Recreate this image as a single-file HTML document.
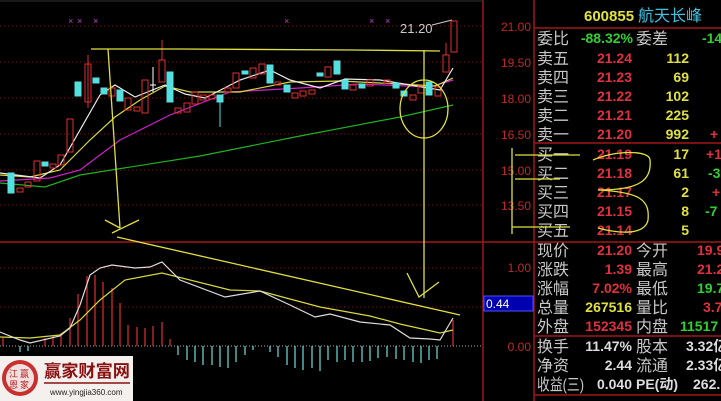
<!DOCTYPE html>
<html><head><meta charset="utf-8"><style>
html,body{margin:0;padding:0;background:#000;width:721px;height:401px;overflow:hidden}
svg{display:block}
text{font-family:"Liberation Sans","Noto Sans CJK SC",sans-serif}
.cj{font-family:"Noto Sans CJK SC","WenQuanYi Zen Hei",sans-serif}
</style></head><body>
<svg width="721" height="401" viewBox="0 0 721 401" xmlns="http://www.w3.org/2000/svg">
<rect width="721" height="401" fill="#000"/>
<g stroke="#7a1010" stroke-width="1" stroke-dasharray="1,3">
<line x1="0" y1="26" x2="483" y2="26"/><line x1="0" y1="62" x2="483" y2="62"/>
<line x1="0" y1="98" x2="483" y2="98"/><line x1="0" y1="134" x2="483" y2="134"/>
<line x1="0" y1="170" x2="483" y2="170"/><line x1="0" y1="205" x2="483" y2="205"/>
<line x1="0" y1="268" x2="483" y2="268"/><line x1="0" y1="307" x2="483" y2="307"/>
</g>
<line x1="0" y1="346" x2="483" y2="346" stroke="#aaa" stroke-dasharray="1,2"/>
<g stroke="#a01818" stroke-width="1.5">
<line x1="483" y1="0" x2="483" y2="401"/><line x1="534" y1="0" x2="534" y2="401"/>
<line x1="0" y1="242" x2="534" y2="242"/>
<line x1="534" y1="28" x2="721" y2="28"/><line x1="534" y1="143" x2="721" y2="143"/>
<line x1="534" y1="242" x2="721" y2="242"/><line x1="534" y1="336" x2="721" y2="336"/>
<line x1="534" y1="395" x2="721" y2="395"/>
</g>
<line x1="0" y1="1" x2="483" y2="1" stroke="#333"/>
<g fill="#c02828" font-size="12" text-anchor="end">
<text x="531" y="31">21.00</text><text x="531" y="67">19.50</text><text x="531" y="103">18.00</text>
<text x="531" y="139">16.50</text><text x="531" y="175">15.00</text><text x="531" y="210">13.50</text>
<text x="531" y="272">1.00</text><text x="531" y="351">0.00</text>
</g>
<rect x="484" y="296" width="49" height="15" fill="#0000b0" stroke="#5050ff"/>
<text x="486" y="308" fill="#fff" font-size="12">0.44</text>
<g fill="#c040c0" font-size="9"><text x="68" y="24">×</text><text x="77" y="24">×</text><text x="93" y="24">×</text><text x="284" y="24">×</text><text x="369" y="24">×</text><text x="385" y="24">×</text></g>
<text x="400" y="33" fill="#ccc" font-size="13">21.20</text>
<line x1="432" y1="25" x2="452" y2="20" stroke="#ccc"/>
<g fill="none" stroke-width="1.2">
<polyline stroke="#20b020" points="0,183 45,187 80,175 200,156 300,136 400,117 453,105"/>
<polyline stroke="#d020d0" points="0,181 50,178 80,170 120,140 170,115 230,92 300,88 360,84 430,87 453,80"/>
<polyline stroke="#d8d840" points="0,175 30,177 60,170 90,140 115,117 140,100 165,86 190,92 240,92 290,82 340,81 400,84 435,86 453,78"/>
<polyline stroke="#eee" points="0,173 40,178 60,165 80,130 100,95 115,85 135,97 165,85 185,94 205,98 240,80 270,70 290,80 320,88 345,79 380,80 410,85 440,90 453,68"/>
</g>
<g stroke-width="1">
<g fill="#55e0e0" stroke="#55e0e0">
<rect x="8" y="173" width="6" height="20"/><rect x="42" y="162" width="6" height="4"/><rect x="75" y="82" width="6" height="14"/><rect x="93" y="78" width="6" height="5"/><rect x="101" y="88" width="6" height="6"/><rect x="117" y="90" width="6" height="11"/><rect x="167" y="72" width="6" height="30"/><rect x="217" y="95" width="6" height="7"/><line x1="220" y1="102" x2="220" y2="127"/><rect x="242" y="71" width="6" height="3"/><rect x="267" y="65" width="6" height="18"/><rect x="284" y="85" width="6" height="7"/><rect x="317" y="73" width="6" height="3"/><rect x="334" y="61" width="6" height="13"/><rect x="342" y="80" width="6" height="9"/><rect x="359" y="84" width="6" height="4"/><rect x="393" y="83" width="6" height="5"/><rect x="401" y="91" width="6" height="5"/><rect x="426" y="82" width="6" height="13"/>
</g>
<g fill="none" stroke="#e03030">
<rect x="17" y="188" width="6" height="4"/><rect x="25" y="182" width="6" height="5"/><rect x="34" y="161" width="6" height="20"/><rect x="50" y="164" width="6" height="4"/><rect x="58" y="155" width="6" height="10"/><rect x="67" y="119" width="6" height="33"/><rect x="85" y="64" width="6" height="38"/><line x1="88" y1="55" x2="88" y2="108"/><rect x="109" y="88" width="6" height="8"/><rect x="125" y="98" width="6" height="12"/><rect x="134" y="107" width="6" height="4"/><rect x="142" y="80" width="6" height="33"/><rect x="159" y="60" width="6" height="22"/><line x1="162" y1="40" x2="162" y2="60"/><rect x="175" y="108" width="6" height="5"/><rect x="184" y="103" width="6" height="9"/><rect x="192" y="92" width="6" height="12"/><rect x="200" y="95" width="6" height="5"/><rect x="209" y="95" width="6" height="4"/><rect x="225" y="88" width="6" height="4"/><rect x="233" y="73" width="6" height="15"/><rect x="250" y="68" width="6" height="10"/><rect x="259" y="64" width="6" height="10"/><rect x="275" y="82" width="6" height="3"/><rect x="292" y="93" width="6" height="5"/><rect x="300" y="91" width="6" height="5"/><rect x="309" y="90" width="6" height="4"/><rect x="325" y="67" width="6" height="10"/><rect x="350" y="85" width="6" height="5"/><rect x="367" y="80" width="6" height="6"/><rect x="384" y="80" width="6" height="3"/><rect x="410" y="95" width="6" height="5"/><rect x="418" y="86" width="6" height="7"/><rect x="435" y="87" width="6" height="9"/><rect x="443" y="55" width="6" height="17"/><line x1="446" y1="43" x2="446" y2="55"/><rect x="451" y="21" width="6" height="31"/>
</g>
<line x1="150" y1="85" x2="156" y2="85" stroke="#fff"/><line x1="153" y1="67" x2="153" y2="92" stroke="#fff"/>
</g>
<g fill="none" stroke="#e0e040" stroke-width="1.3">
<polyline points="91,49 180,49 353,50 440,51"/>
<line x1="108" y1="49" x2="120" y2="228"/>
<polyline points="105,220 120,228"/><line x1="112" y1="233" x2="139" y2="220"/>
<line x1="424" y1="50" x2="424" y2="298"/>
<ellipse cx="424" cy="109" rx="24" ry="29"/>
<line x1="117" y1="237" x2="460" y2="315"/>
<polyline points="407,273 419,297 439,282"/>
</g>
<g stroke="#e03030" stroke-width="1.2">
<line x1="3" y1="346" x2="3" y2="338"/><line x1="45" y1="346" x2="45" y2="338"/><line x1="53" y1="346" x2="53" y2="336"/><line x1="61" y1="346" x2="61" y2="333"/><line x1="70" y1="346" x2="70" y2="318"/><line x1="78" y1="346" x2="78" y2="294"/><line x1="87" y1="346" x2="87" y2="276"/><line x1="95" y1="346" x2="95" y2="275"/><line x1="103" y1="346" x2="103" y2="282"/><line x1="112" y1="346" x2="112" y2="288"/><line x1="120" y1="346" x2="120" y2="303"/><line x1="128" y1="346" x2="128" y2="325"/><line x1="137" y1="346" x2="137" y2="327"/><line x1="145" y1="346" x2="145" y2="328"/><line x1="153" y1="346" x2="153" y2="326"/><line x1="162" y1="346" x2="162" y2="322"/><line x1="170" y1="346" x2="170" y2="339"/><line x1="453" y1="346" x2="453" y2="320"/>
</g>
<g stroke="#70e0e0" stroke-width="1.2">
<line x1="20" y1="346" x2="20" y2="352"/><line x1="28" y1="346" x2="28" y2="351"/>
<line x1="178" y1="346" x2="178" y2="355"/><line x1="187" y1="346" x2="187" y2="360"/><line x1="195" y1="346" x2="195" y2="362"/><line x1="203" y1="346" x2="203" y2="365"/><line x1="212" y1="346" x2="212" y2="365"/><line x1="220" y1="346" x2="220" y2="367"/><line x1="228" y1="346" x2="228" y2="368"/><line x1="236" y1="346" x2="236" y2="362"/><line x1="245" y1="346" x2="245" y2="355"/><line x1="253" y1="346" x2="253" y2="350"/><line x1="270" y1="346" x2="270" y2="352"/><line x1="278" y1="346" x2="278" y2="357"/><line x1="287" y1="346" x2="287" y2="365"/><line x1="295" y1="346" x2="295" y2="368"/><line x1="303" y1="346" x2="303" y2="370"/><line x1="312" y1="346" x2="312" y2="368"/><line x1="320" y1="346" x2="320" y2="371"/><line x1="328" y1="346" x2="328" y2="360"/><line x1="337" y1="346" x2="337" y2="362"/><line x1="345" y1="346" x2="345" y2="360"/><line x1="353" y1="346" x2="353" y2="362"/><line x1="362" y1="346" x2="362" y2="362"/><line x1="370" y1="346" x2="370" y2="361"/><line x1="378" y1="346" x2="378" y2="358"/><line x1="387" y1="346" x2="387" y2="357"/><line x1="396" y1="346" x2="396" y2="359"/><line x1="404" y1="346" x2="404" y2="360"/><line x1="413" y1="346" x2="413" y2="362"/><line x1="421" y1="346" x2="421" y2="363"/><line x1="429" y1="346" x2="429" y2="360"/><line x1="437" y1="346" x2="437" y2="359"/>
</g>
<g fill="none" stroke-width="1.2">
<polyline stroke="#d8d840" points="0,337 30,338 60,335 80,320 100,300 125,280 162,273 230,290 260,291 320,307 370,316 400,324 440,333 453,330"/>
<polyline stroke="#ddd" points="0,332 20,340 30,343 60,336 70,328 80,305 90,275 100,268 112,265 135,268 150,267 162,262 180,280 225,297 260,291 290,305 315,317 330,314 360,322 390,325 410,338 430,339 440,340 453,318"/>
</g>
<rect x="0" y="356" width="133" height="45" fill="#f4f0ee"/>
<circle cx="20" cy="378" r="18" fill="#c83030"/>
<circle cx="20" cy="378" r="14" fill="#f2e0e0"/>
<g class="cj" fill="#b02020" font-size="9"><text x="9" y="377">江</text><text x="20" y="377">赢</text><text x="9" y="388">恩</text><text x="20" y="388">家</text></g>
<text x="44" y="377" class="cj" fill="#8a1010" font-size="17" font-weight="bold" textLength="86" lengthAdjust="spacingAndGlyphs">赢家财富网</text>
<line x1="44" y1="383" x2="130" y2="383" stroke="#8a1010" stroke-width="1.5"/>
<text x="50" y="395" fill="#222" font-size="8" font-family="Liberation Mono">www.yingjia360.com</text>
<text x="584" y="21" fill="#e0e040" font-size="15" font-weight="bold">600855</text>
<text x="638" y="21" class="cj" fill="#40c0e0" font-size="16">航天长峰</text>
<g class="cj" fill="#c8c8c8" font-size="16">
<text x="537" y="44">委比</text><text x="636" y="44">委差</text>
<text x="537" y="64">卖五</text><text x="537" y="83">卖四</text><text x="537" y="102">卖三</text><text x="537" y="121">卖二</text><text x="537" y="140">卖一</text>
<text x="537" y="160">买一</text><text x="537" y="179">买二</text><text x="537" y="198">买三</text><text x="537" y="217">买四</text><text x="537" y="236">买五</text>
<text x="537" y="256">现价</text><text x="636" y="256">今开</text><text x="537" y="275">涨跌</text><text x="636" y="275">最高</text><text x="537" y="294">涨幅</text><text x="636" y="294">最低</text><text x="537" y="313">总量</text><text x="636" y="313">量比</text><text x="537" y="332">外盘</text><text x="636" y="332">内盘</text>
<text x="537" y="352">换手</text><text x="636" y="352">股本</text><text x="537" y="371">净资</text><text x="636" y="371">流通</text><text x="537" y="390" textLength="47" lengthAdjust="spacingAndGlyphs">收益(三)</text>
</g>
<g font-size="14" font-weight="bold" text-anchor="end">
<text x="633" y="43" fill="#30d030">-88.32%</text><text x="730" y="43" fill="#30d030">-140</text>
<g fill="#e03040"><text x="632" y="63">21.24</text><text x="632" y="82">21.23</text><text x="632" y="101">21.22</text><text x="632" y="120">21.21</text><text x="632" y="139">21.20</text><text x="632" y="159">21.19</text><text x="632" y="178">21.18</text><text x="632" y="197">21.17</text><text x="632" y="216">21.15</text><text x="632" y="235">21.14</text></g>
<g fill="#e0e040"><text x="689" y="63">112</text><text x="689" y="82">69</text><text x="689" y="101">102</text><text x="689" y="120">225</text><text x="689" y="139">992</text><text x="689" y="159">17</text><text x="689" y="178">61</text><text x="689" y="197">2</text><text x="689" y="216">8</text><text x="689" y="235">5</text></g>
<text x="632" y="255" fill="#e03040">21.20</text><text x="632" y="274" fill="#e03040">1.39</text><text x="632" y="293" fill="#e03040">7.02%</text><text x="632" y="312" fill="#e0e040">267516</text><text x="632" y="331" fill="#e03040">152345</text>
<text x="632" y="351" fill="#ddd">11.47%</text><text x="632" y="370" fill="#ddd">2.44</text><text x="632" y="389" fill="#ddd">0.040</text>
<g text-anchor="start"><text x="697" y="255" fill="#e03040">19.9</text><text x="697" y="274" fill="#e03040">21.2</text><text x="697" y="293" fill="#30d030">19.7</text><text x="703" y="312" fill="#e03040">3.7</text><text x="680" y="331" fill="#30d030">11517</text><text x="686" y="351" fill="#ddd">3.32亿</text><text x="686" y="370" fill="#ddd">2.33亿</text><text x="693" y="389" fill="#ddd">262.</text><text x="636" y="389" fill="#ddd">PE(动)</text>
<text x="710" y="139" fill="#e03040">+</text><text x="706" y="159" fill="#e03040">+1</text><text x="708" y="178" fill="#30d030">-3</text><text x="712" y="197" fill="#e03040">+</text><text x="705" y="216" fill="#30d030">-7</text></g>
</g>
<g fill="none" stroke="#e0e040" stroke-width="1.3">
<line x1="512" y1="148" x2="512" y2="234"/>
<line x1="515" y1="155" x2="580" y2="155"/><line x1="515" y1="179" x2="560" y2="179"/><line x1="512" y1="227" x2="570" y2="227"/>
<path d="M593,160 C615,150 650,150 650,160 C652,180 640,190 598,190 C640,192 650,200 648,220 C645,235 620,234 598,228"/>
</g>
</svg>
</body></html>
